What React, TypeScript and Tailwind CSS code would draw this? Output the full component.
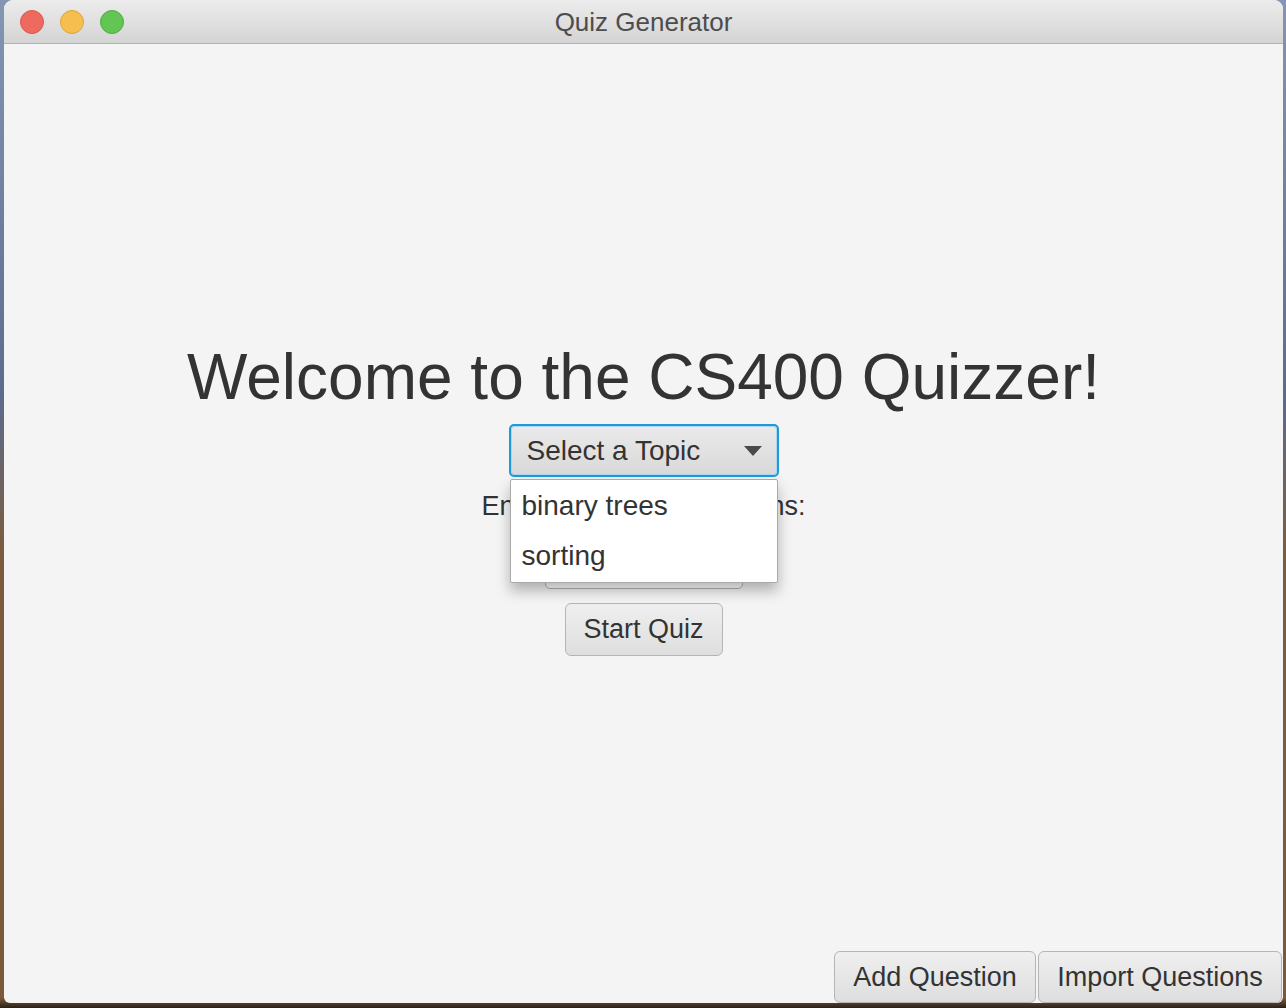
import React from "react";

const sans = { fontFamily: '"Liberation Sans", Arial, sans-serif' };

const TrafficLights = () => (
  <div className="flex items-center gap-[16px] pl-[16px]">
    <span className="w-[24px] h-[24px] rounded-full bg-[#ee6a5e] border border-[#d8574c]" />
    <span className="w-[24px] h-[24px] rounded-full bg-[#f6be4f] border border-[#dea53c]" />
    <span className="w-[24px] h-[24px] rounded-full bg-[#62c554] border border-[#50ab42]" />
  </div>
);

const topics = ["binary trees", "sorting"];

export default function App() {
  return (
    <div
      className="w-[1286px] h-[1008px] overflow-hidden flex bg-[linear-gradient(to_bottom,#8496b3_0%,#5d6b8a_40%,#7b5c3d_55%,#7a5a3a_99%,#2a2018_100%)]"
      style={sans}
    >
      <div className="ml-[4px] w-[1279px] h-[1003px] flex flex-col rounded-t-[9px] rounded-b-[6px] overflow-hidden bg-[#f4f4f4] text-[#333333]">
        {/* title bar */}
        <div className="relative h-[44px] shrink-0 flex items-center bg-[linear-gradient(to_bottom,#ececec,#d4d4d4)] border-b border-[#b1b1b1]">
          <TrafficLights />
          <div className="absolute inset-0 pt-[2px] flex items-center justify-center text-[26px] text-[#4d4d4d] pointer-events-none">
            Quiz Generator
          </div>
        </div>

        {/* main content */}
        <div className="flex-1 flex flex-col items-center pt-[301px]">
          <h1 className="text-[64px] leading-none font-normal">Welcome to the CS400 Quizzer!</h1>

          <div className="relative mt-[15px]">
            <div className="w-[270px] h-[53px] rounded-[5px] border-2 border-[#1e9ad6] p-[1px] bg-[#aed7ef]">
              <div className="h-full rounded-[3px] bg-[linear-gradient(to_bottom,#eaeaea,#d9d9d9)] flex items-center justify-between pl-[15px] pr-[14px]">
                <span className="text-[28px]">Select a Topic</span>
                <svg width="18" height="10" viewBox="0 0 18 10">
                  <path d="M0 0 H18 L9 10 Z" fill="#4a4a4a" />
                </svg>
              </div>
            </div>

            {/* open popup list */}
            <div className="absolute left-[1px] top-[55px] w-[268px] z-10 bg-white border border-[#a9a9a9] rounded-[2px] shadow-[0_8px_14px_rgba(0,0,0,0.28)] py-[1px]">
              {topics.map((t) => (
                <div key={t} className="h-[50px] flex items-center pl-[11px] text-[28px]">
                  {t}
                </div>
              ))}
            </div>
          </div>

          <div className="mt-[14px] text-[27px] leading-[31px]">Enter number of questions:</div>

          <div className="mt-[14px] w-[198px] h-[53px] rounded-[5px] border border-[#b3b3b3] bg-white" />

          <button className="mt-[14px] w-[158px] h-[53px] rounded-[6px] border border-[#b5b5b5] bg-[linear-gradient(to_bottom,#efefef,#dedede)] text-[27px] text-[#333333]">
            Start Quiz
          </button>
        </div>

        {/* bottom buttons */}
        <div className="flex justify-end gap-[2px] pr-[1px] h-[52px] shrink-0">
          <button className="w-[202px] h-[52px] rounded-[6px] border border-[#b5b5b5] bg-[linear-gradient(to_bottom,#efefef,#dedede)] text-[27px] text-[#333333]">
            Add Question
          </button>
          <button className="w-[244px] h-[52px] rounded-[6px] border border-[#b5b5b5] bg-[linear-gradient(to_bottom,#efefef,#dedede)] text-[27px] text-[#333333]">
            Import Questions
          </button>
        </div>
      </div>
    </div>
  );
}
